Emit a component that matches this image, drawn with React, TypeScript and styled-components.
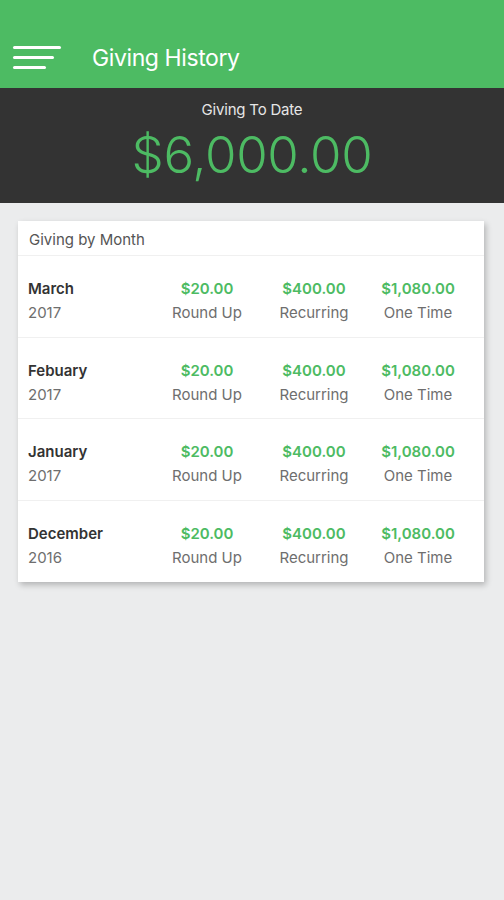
import React from "react";
import styled, { createGlobalStyle } from "styled-components";

const Global = createGlobalStyle`
  html, body { margin: 0; padding: 0; }
  body {
    background: #ebeced;
    font-family: Inter, "Liberation Sans", Arial, sans-serif;
    -webkit-font-smoothing: antialiased;
  }
`;

const Screen = styled.div`
  width: 504px;
  min-height: 900px;
  background: #ebeced;
  display: flex;
  flex-direction: column;
`;

const AppBar = styled.header`
  height: 88px;
  box-sizing: border-box;
  background: #4dbb63;
  display: flex;
  align-items: center;
  padding: 28px 0 0 13px;
  gap: 31px;
`;

const Burger = styled.div`
  display: flex;
  flex-direction: column;
  gap: 7px;
  width: 48px;
  margin-top: -2px;
`;

const BurgerLine = styled.span<{ $w: number }>`
  display: block;
  height: 3px;
  border-radius: 2px;
  background: #fff;
  width: ${(p) => p.$w}px;
`;

const Title = styled.h1`
  margin: 0;
  color: #fff;
  font-size: 23px;
  font-weight: 400;
  letter-spacing: -0.4px;
`;

const Summary = styled.section`
  height: 115px;
  box-sizing: border-box;
  background: #333333;
  display: flex;
  flex-direction: column;
  align-items: center;
  padding-top: 12px;
`;

const SummaryLabel = styled.div`
  color: #e6e6e6;
  font-size: 15px;
  letter-spacing: -0.2px;
`;

const SummaryAmount = styled.div`
  color: #4dbb63;
  font-size: 51px;
  font-weight: 300;
  margin-top: 10px;
  line-height: 1;
  letter-spacing: -0.3px;
`;

const Card = styled.section`
  margin: 18px 20px 0 18px;
  background: #fff;
  box-shadow: 2px 3px 6px rgba(0, 0, 0, 0.24);
`;

const CardHeader = styled.div`
  height: 35px;
  box-sizing: border-box;
  padding: 9px 0 0 11px;
  color: #555;
  font-size: 15px;
  border-bottom: 1px solid #f0f0f0;
`;

const Row = styled.div<{ $last?: boolean }>`
  height: 81.5px;
  box-sizing: border-box;
  display: grid;
  grid-template-columns: 127px 104px 110px 98px;
  align-items: center;
  padding: 9px 0 0 10px;
  border-bottom: ${(p) => (p.$last ? "none" : "1px solid #f0f0f0")};
`;

const Cell = styled.div<{ $center?: boolean }>`
  display: flex;
  flex-direction: column;
  gap: 5px;
  align-items: ${(p) => (p.$center ? "center" : "flex-start")};
`;

const Month = styled.div`
  color: #333;
  font-size: 15px;
  font-weight: 600;
`;

const Sub = styled.div`
  color: #6e6e6e;
  font-size: 15px;
`;

const Amount = styled.div`
  color: #4dbb63;
  font-size: 15px;
  font-weight: 600;
`;

const rows = [
  { m: "March", y: "2017" },
  { m: "Febuary", y: "2017" },
  { m: "January", y: "2017" },
  { m: "December", y: "2016" },
];

const cols = [
  { a: "$20.00", l: "Round Up" },
  { a: "$400.00", l: "Recurring" },
  { a: "$1,080.00", l: "One Time" },
];

export default function App() {
  return (
    <Screen>
      <Global />
      <AppBar>
        <Burger>
          <BurgerLine $w={48} />
          <BurgerLine $w={41} />
          <BurgerLine $w={33} />
        </Burger>
        <Title>Giving History</Title>
      </AppBar>
      <Summary>
        <SummaryLabel>Giving To Date</SummaryLabel>
        <SummaryAmount>$6,000.00</SummaryAmount>
      </Summary>
      <Card>
        <CardHeader>Giving by Month</CardHeader>
        {rows.map((r, i) => (
          <Row key={r.m} $last={i === rows.length - 1}>
            <Cell>
              <Month>{r.m}</Month>
              <Sub>{r.y}</Sub>
            </Cell>
            {cols.map((c) => (
              <Cell $center key={c.l}>
                <Amount>{c.a}</Amount>
                <Sub>{c.l}</Sub>
              </Cell>
            ))}
          </Row>
        ))}
      </Card>
    </Screen>
  );
}
